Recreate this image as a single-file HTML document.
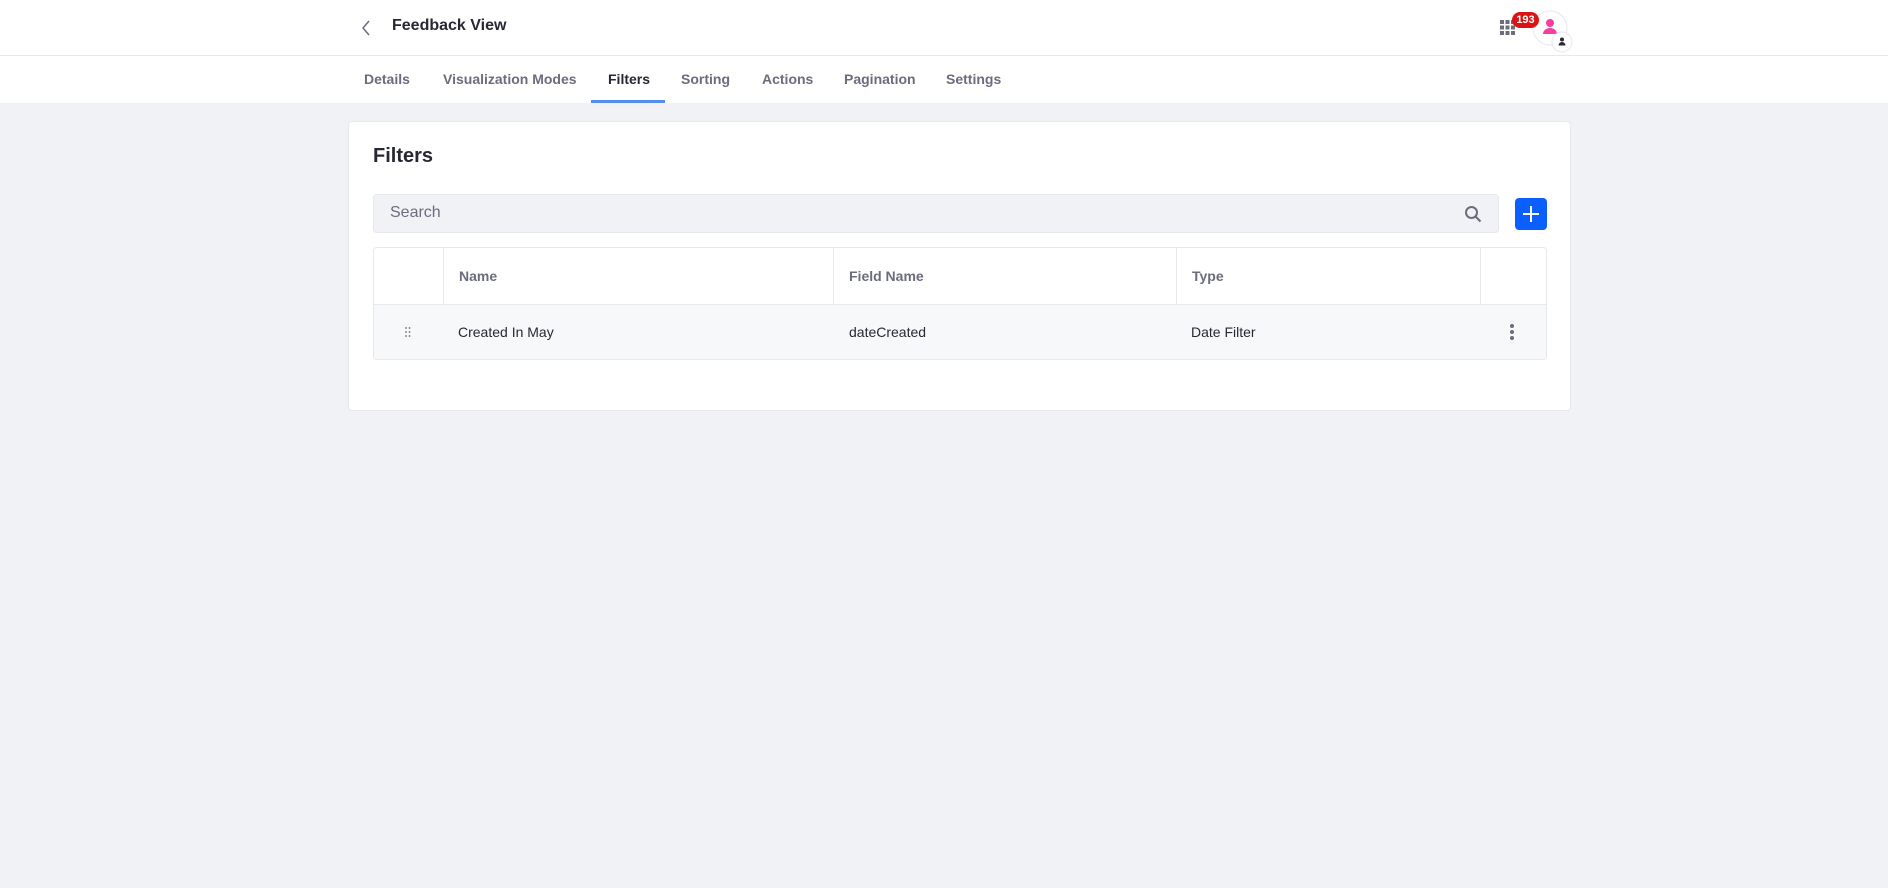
<!DOCTYPE html>
<html><head><meta charset="utf-8"><style>
*{box-sizing:border-box;margin:0;padding:0}
body{width:1888px;height:888px;background:#f1f2f5;font-family:"Liberation Sans",sans-serif;position:relative;overflow:hidden;color:#272833}
.abs{position:absolute}
#top{left:0;top:0;width:1888px;height:103px;background:#fff}
#hb{left:0;top:55px;width:1888px;height:1px;background:#e7e7ed}
.tab{top:71px;font-size:14px;font-weight:bold;color:#6b6c7e}
.card{left:348px;top:121px;width:1223px;height:290px;background:#fff;border:1px solid #e7e7ed;border-radius:4px}
.th{font-size:14px;font-weight:bold;color:#6b6c7e;top:268px}
.td{font-size:14px;color:#272833;top:324px}
</style></head><body>
<div class="abs" id="top"></div>
<div class="abs" id="hb"></div>
<svg class="abs" style="left:361px;top:20px" width="10" height="16"><path d="M8 1L2 8l6 7" stroke="#6b6c7e" stroke-width="1.5" fill="none"/></svg>
<div class="abs" style="left:392px;top:17px;font-size:16px;font-weight:bold;color:#272833">Feedback View</div>
<svg class="abs" style="left:1500px;top:20px" width="15" height="15" fill="#6b6c7e"><rect x="0" y="0" width="4" height="4"/><rect x="5.5" y="0" width="4" height="4"/><rect x="11" y="0" width="4" height="4"/><rect x="0" y="5.5" width="4" height="4"/><rect x="5.5" y="5.5" width="4" height="4"/><rect x="11" y="5.5" width="4" height="4"/><rect x="0" y="11" width="4" height="4"/><rect x="5.5" y="11" width="4" height="4"/><rect x="11" y="11" width="4" height="4"/></svg>
<svg class="abs" style="left:1530px;top:9px" width="45" height="45"><circle cx="20" cy="19" r="17" fill="#fff" stroke="#e7e7ed"/><circle cx="20" cy="14" r="4" fill="#f43f9e"/><path d="M13 25a7 6 0 0 1 14 0z" fill="#f43f9e"/><circle cx="32" cy="33" r="10" fill="#fff" stroke="#e7e7ed"/><circle cx="32" cy="30.5" r="2" fill="#272833"/><path d="M28.5 36.5a3.5 3.5 0 0 1 7 0z" fill="#272833"/></svg>
<div class="abs" style="left:1512px;top:12px;width:27px;height:16px;background:#da1414;border-radius:8px;color:#fff;font-size:11px;font-weight:bold;text-align:center;line-height:16px">193</div>
<div class="abs tab" style="left:364px">Details</div>
<div class="abs tab" style="left:443px">Visualization Modes</div>
<div class="abs tab" style="left:608px;color:#272833">Filters</div>
<div class="abs tab" style="left:681px">Sorting</div>
<div class="abs tab" style="left:762px">Actions</div>
<div class="abs tab" style="left:844px">Pagination</div>
<div class="abs tab" style="left:946px">Settings</div>
<div class="abs" style="left:591px;top:100px;width:74px;height:3px;background:#528ef0"></div>
<div class="abs card"></div>
<div class="abs" style="left:373px;top:145px;font-size:20px;font-weight:bold">Filters</div>
<div class="abs" style="left:373px;top:194px;width:1126px;height:39px;background:#f1f2f5;border:1px solid #e7e7ed;border-radius:4px"></div>
<div class="abs" style="left:390px;top:204px;font-size:16px;color:#6b6c7e">Search</div>
<svg class="abs" style="left:1464px;top:205px" width="18" height="18"><circle cx="7.5" cy="7.5" r="5.5" stroke="#6b6c7e" stroke-width="2" fill="none"/><path d="M11.5 11.5l5 5" stroke="#6b6c7e" stroke-width="2"/></svg>
<div class="abs" style="left:1515px;top:198px;width:32px;height:32px;background:#0b5fff;border-radius:4px"></div>
<svg class="abs" style="left:1515px;top:198px" width="32" height="32"><path d="M16 8v16M8 16h16" stroke="#fff" stroke-width="2"/></svg>
<div class="abs" style="left:373px;top:247px;width:1174px;height:113px;border:1px solid #e7e7ed;border-radius:4px;overflow:hidden">
<div class="abs" style="left:0;top:56px;width:1174px;height:57px;background:#f7f8f9;border-top:1px solid #e7e7ed"></div>
<div class="abs" style="left:69px;top:0;width:1px;height:56px;background:#e7e7ed"></div>
<div class="abs" style="left:459px;top:0;width:1px;height:56px;background:#e7e7ed"></div>
<div class="abs" style="left:802px;top:0;width:1px;height:56px;background:#e7e7ed"></div>
<div class="abs" style="left:1106px;top:0;width:1px;height:56px;background:#e7e7ed"></div>
</div>
<div class="abs th" style="left:459px">Name</div>
<div class="abs th" style="left:849px">Field Name</div>
<div class="abs th" style="left:1192px">Type</div>
<svg class="abs" style="left:405px;top:327px" width="6" height="10" fill="#6b6c7e"><circle cx="1" cy="1" r="0.9"/><circle cx="4.5" cy="1" r="0.9"/><circle cx="1" cy="5" r="0.9"/><circle cx="4.5" cy="5" r="0.9"/><circle cx="1" cy="9" r="0.9"/><circle cx="4.5" cy="9" r="0.9"/></svg>
<div class="abs td" style="left:458px">Created In May</div>
<div class="abs td" style="left:849px">dateCreated</div>
<div class="abs td" style="left:1191px">Date Filter</div>
<svg class="abs" style="left:1509px;top:323px" width="6" height="18" fill="#6b6c7e"><circle cx="3" cy="3" r="2"/><circle cx="3" cy="9" r="2"/><circle cx="3" cy="15" r="2"/></svg>
</body></html>
